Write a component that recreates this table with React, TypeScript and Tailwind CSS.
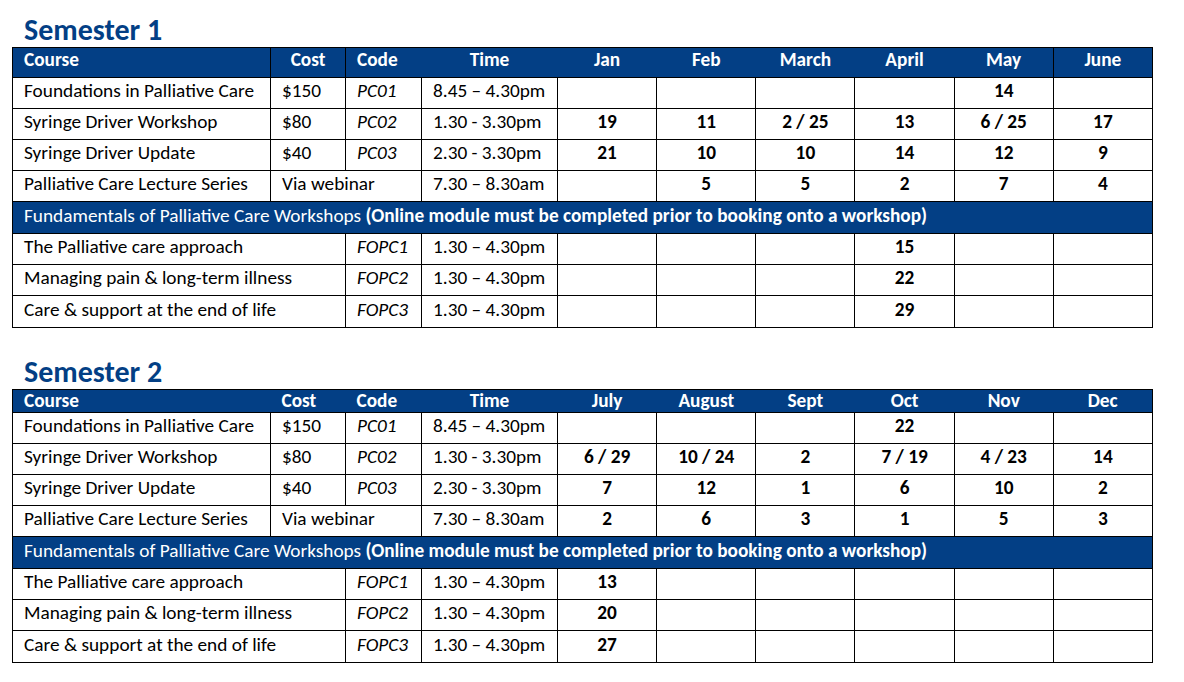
import type { ReactNode } from 'react';

type Course = {
  name: string;
  cost?: string;
  code?: string;
  time: string;
  dates: string[];
  webinar?: boolean;
};

type Semester = {
  title: string;
  months: string[];
  courses: Course[];
  workshops: Course[];
  compact?: boolean;
};

const semesters: Semester[] = [
  {
    title: 'Semester 1',
    months: ['Jan', 'Feb', 'March', 'April', 'May', 'June'],
    courses: [
      { name: 'Foundations in Palliative Care', cost: '$150', code: 'PC01', time: '8.45 – 4.30pm', dates: ['', '', '', '', '14', ''] },
      { name: 'Syringe Driver Workshop', cost: '$80', code: 'PC02', time: '1.30 - 3.30pm', dates: ['19', '11', '2 / 25', '13', '6 / 25', '17'] },
      { name: 'Syringe Driver Update', cost: '$40', code: 'PC03', time: '2.30 - 3.30pm', dates: ['21', '10', '10', '14', '12', '9'] },
      { name: 'Palliative Care Lecture Series', webinar: true, time: '7.30 – 8.30am', dates: ['', '5', '5', '2', '7', '4'] },
    ],
    workshops: [
      { name: 'The Palliative care approach', code: 'FOPC1', time: '1.30 – 4.30pm', dates: ['', '', '', '15', '', ''] },
      { name: 'Managing pain & long-term illness', code: 'FOPC2', time: '1.30 – 4.30pm', dates: ['', '', '', '22', '', ''] },
      { name: 'Care & support at the end of life', code: 'FOPC3', time: '1.30 – 4.30pm', dates: ['', '', '', '29', '', ''] },
    ],
  },
  {
    title: 'Semester 2',
    compact: true,
    months: ['July', 'August', 'Sept', 'Oct', 'Nov', 'Dec'],
    courses: [
      { name: 'Foundations in Palliative Care', cost: '$150', code: 'PC01', time: '8.45 – 4.30pm', dates: ['', '', '', '22', '', ''] },
      { name: 'Syringe Driver Workshop', cost: '$80', code: 'PC02', time: '1.30 - 3.30pm', dates: ['6 / 29', '10 / 24', '2', '7 / 19', '4 / 23', '14'] },
      { name: 'Syringe Driver Update', cost: '$40', code: 'PC03', time: '2.30 - 3.30pm', dates: ['7', '12', '1', '6', '10', '2'] },
      { name: 'Palliative Care Lecture Series', webinar: true, time: '7.30 – 8.30am', dates: ['2', '6', '3', '1', '5', '3'] },
    ],
    workshops: [
      { name: 'The Palliative care approach', code: 'FOPC1', time: '1.30 – 4.30pm', dates: ['13', '', '', '', '', ''] },
      { name: 'Managing pain & long-term illness', code: 'FOPC2', time: '1.30 – 4.30pm', dates: ['20', '', '', '', '', ''] },
      { name: 'Care & support at the end of life', code: 'FOPC3', time: '1.30 – 4.30pm', dates: ['27', '', '', '', '', ''] },
    ],
  },
];

// text sits a little high in each cell, like the Word table it came from
const cell = 'border border-black px-[11px] pt-0 pb-[4px] align-middle whitespace-nowrap';

function Td({ children, className = '', colSpan }: { children?: ReactNode; className?: string; colSpan?: number }) {
  return (
    <td colSpan={colSpan} className={`${cell} ${className}`}>
      {children}
    </td>
  );
}

function DateCells({ dates }: { dates: string[] }) {
  return (
    <>
      {dates.map((d, i) => (
        <Td key={i} className="text-center font-bold">
          {d}
        </Td>
      ))}
    </>
  );
}

function SemesterTable({ sem }: { sem: Semester }) {
  const head = sem.compact ? 'h-[23px] [&>th]:pb-0' : 'h-[30px] [&>th]:pb-[5px]';
  return (
    <div>
      <h2 className="pl-6 text-[30px] leading-[30px] font-bold text-[#033f85] mb-[2px]">{sem.title}</h2>
      <table className="ml-3 w-[1141px] table-fixed border-collapse border border-black text-[19.3px] leading-none text-black">
        <colgroup>
          <col className="w-[258px]" />
          <col className="w-[75px]" />
          <col className="w-[76px]" />
          <col className="w-[136px]" />
          {sem.months.map((m) => (
            <col key={m} />
          ))}
        </colgroup>
        <thead>
          <tr className={`${head} bg-[#033f85] text-white font-bold`}>
            <th className={`px-[11px] text-left ${sem.compact ? '' : 'border-r border-black'}`}>Course</th>
            <th className={`px-[11px] ${sem.compact ? 'text-left' : 'text-center border-r border-black'}`}>Cost</th>
            <th className="px-[11px] text-left">Code</th>
            <th className="px-[11px] text-center">Time</th>
            {sem.months.map((m, i) => (
              <th key={m} className={`px-1 text-center ${!sem.compact && i === 4 ? 'border-r border-black' : ''}`}>
                {m}
              </th>
            ))}
          </tr>
        </thead>
        <tbody>
          {sem.courses.map((c) => (
            <tr key={c.name} className="h-[31px]">
              <Td>{c.name}</Td>
              {c.webinar ? (
                <Td colSpan={2}>Via webinar</Td>
              ) : (
                <>
                  <Td>{c.cost}</Td>
                  <Td className="italic">{c.code}</Td>
                </>
              )}
              <Td>{c.time}</Td>
              <DateCells dates={c.dates} />
            </tr>
          ))}
          <tr className="h-[32px] bg-[#033f85] text-white">
            <td colSpan={10} className="border border-black px-[11px] pt-0 pb-[4px] whitespace-nowrap">
              Fundamentals of Palliative Care Workshops{' '}
              <span className="font-bold">(Online module must be completed prior to booking onto a workshop)</span>
            </td>
          </tr>
          {sem.workshops.map((c, i) => (
            <tr key={c.name} className={i === 2 ? 'h-[32px]' : 'h-[31px]'}>
              <Td colSpan={2}>{c.name}</Td>
              <Td className="italic">{c.code}</Td>
              <Td>{c.time}</Td>
              <DateCells dates={c.dates} />
            </tr>
          ))}
        </tbody>
      </table>
    </div>
  );
}

export default function App() {
  return (
    <div
      className="w-[1184px] h-[682px] bg-white pt-[15px] flex flex-col gap-[29px]"
      style={{ fontFamily: 'Carlito, Lato, "Open Sans", sans-serif' }}
    >
      {semesters.map((s) => (
        <SemesterTable key={s.title} sem={s} />
      ))}
    </div>
  );
}
